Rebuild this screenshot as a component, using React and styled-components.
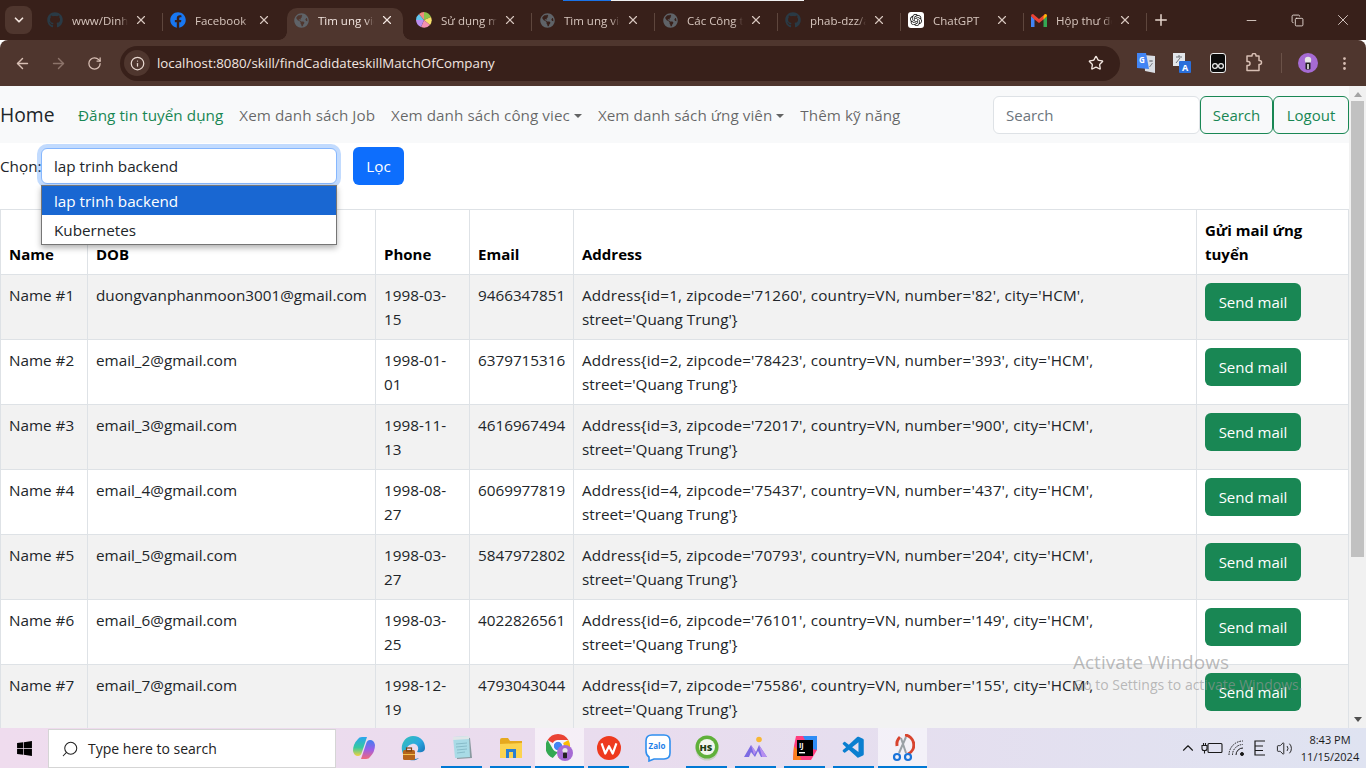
import React from 'react'
import styled, { createGlobalStyle } from 'styled-components'
import {
  ArrowLeft, ArrowRight, RotateCw, Info, Star, EllipsisVertical, Plus, X, Minus, Copy,
  ChevronDown, ChevronUp, Volume2, Search as SearchIcon,
} from 'lucide-react'
import { FaGithub, FaFacebook, FaGlobeAmericas, FaWindows } from 'react-icons/fa'
import { SiOpenai } from 'react-icons/si'
import { VscVscode } from 'react-icons/vsc'

const GlobalStyle = createGlobalStyle`
  html, body {
    margin: 0;
    padding: 0;
    overflow: hidden;
  }
  body {
    font-family: 'Open Sans', 'Liberation Sans', sans-serif;
    font-size: 15.25px;
    color: #212529;
  }
  * { box-sizing: border-box; }
`

const Screen = styled.div`
  position: relative;
  width: 1366px;
  height: 768px;
  display: flex;
  flex-direction: column;
  overflow: hidden;
`

const LoadStrip = styled.div`
  position: absolute;
  top: 0;
  left: 563px;
  width: 241px;
  height: 1px;
  background: linear-gradient(90deg, #1a73e8 0 48px, #f1f1f1 48px);
`

const TabStrip = styled.div`
  height: 40px;
  background: #38201a;
  display: flex;
  align-items: flex-end;
  padding-left: 5px;
  flex-shrink: 0;
`

const TabSearch = styled.div`
  width: 27px;
  height: 28px;
  margin: 0 8px 6px 0;
  border-radius: 8px;
  background: #4f362e;
  color: #f2e4dd;
  display: flex;
  align-items: center;
  justify-content: center;
`

const Tab = styled.div`
  position: relative;
  z-index: 0;
  width: 123px;
  height: 32px;
  display: flex;
  align-items: center;
  padding: 0 15px 8px 7px;
  color: ${(p) => (p.$active ? '#f3e6e0' : '#d7c6be')};
  font-size: 11.5px;
  &::after {
    content: ${(p) => (p.$divider ? "''" : 'none')};
    position: absolute;
    right: 0;
    top: 5px;
    width: 1px;
    height: 18px;
    background: #5e463d;
  }
`

const ActiveBack = styled.div`
  position: absolute;
  z-index: -1;
  top: 0;
  bottom: 0;
  left: 1px;
  right: 6px;
  border-radius: 10px 10px 0 0;
  background: #4f362e;
`

const TabFlare = styled.div`
  position: absolute;
  bottom: 0;
  width: 8px;
  height: 8px;
  ${(p) => (p.$right ? 'right: -8px;' : 'left: -8px;')}
  background: radial-gradient(
    circle at ${(p) => (p.$right ? '100% 0' : '0 0')},
    transparent 7.5px,
    #4f362e 8px
  );
`

const TabIcon = styled.div`
  width: 16px;
  height: 16px;
  flex-shrink: 0;
  display: flex;
  align-items: center;
  justify-content: center;
  color: ${(p) => p.$color || '#5f6368'};
`

const TabTitle = styled.div`
  flex: 1;
  margin: 0 6px 0 9px;
  white-space: nowrap;
  overflow: hidden;
  -webkit-mask-image: linear-gradient(90deg, #000 84%, transparent 100%);
  mask-image: linear-gradient(90deg, #000 84%, transparent 100%);
`

const NewTab = styled.div`
  width: 20px;
  margin: 0 0 10px 4px;
  height: 20px;
  color: #e6d6ce;
  display: flex;
  align-items: center;
  justify-content: center;
`

const WindowButtons = styled.div`
  margin-left: auto;
  display: flex;
  align-self: flex-start;
  height: 40px;
  color: #efe3dd;
`

const WindowButton = styled.div`
  width: 46px;
  display: flex;
  align-items: center;
  justify-content: center;
`

const Toolbar = styled.div`
  height: 46px;
  flex-shrink: 0;
  background: #4f362e;
  border-radius: 8px 8px 0 0;
  display: flex;
  align-items: center;
  padding: 0 9px 0 4px;
  color: #d8bfb4;
`

const NavIcon = styled.div`
  width: 36px;
  display: flex;
  justify-content: center;
  opacity: ${(p) => (p.$off ? 0.45 : 1)};
`

const Omnibox = styled.div`
  width: 1000px;
  height: 35px;
  margin-left: 8px;
  border-radius: 18px;
  background: #38201a;
  display: flex;
  align-items: center;
  padding: 0 16px 0 4px;
  color: #f2e6e0;
  font-size: 13.3px;
`

const SiteInfo = styled.div`
  width: 26px;
  height: 26px;
  border-radius: 50%;
  background: #4f362e;
  display: flex;
  align-items: center;
  justify-content: center;
  margin-right: 7px;
  color: #e8d8d0;
`

const Url = styled.div`
  flex: 1;
`

const Extensions = styled.div`
  flex: 1;
  display: flex;
  align-items: center;
  padding-left: 16px;
  gap: 16px;
`

const ExtSlot = styled.div`
  width: 20px;
  height: 20px;
  display: flex;
  align-items: center;
  justify-content: center;
`

const ToolDivider = styled.div`
  width: 1px;
  height: 20px;
  background: #6b5248;
  margin-left: 1px;
`

const Main = styled.div`
  flex: 1;
  display: flex;
  min-height: 0;
`

const Viewport = styled.div`
  position: relative;
  flex: 1;
  overflow: hidden;
  background: #fff;
`

const Scrollbar = styled.div`
  width: 17px;
  background: #f1f1f1;
  display: flex;
  flex-direction: column;
  align-items: center;
  justify-content: space-between;
  padding: 6px 0 6px;
`

const ScrollArrow = styled.div`
  width: 0;
  height: 0;
  border-left: 4px solid transparent;
  border-right: 4px solid transparent;
  border-top: ${(p) => (p.$down ? '5px solid #505050' : '0')};
  border-bottom: ${(p) => (p.$down ? '0' : '5px solid #a3a3a3')};
`

const ScrollThumb = styled.div`
  width: 13px;
  height: 456px;
  margin: 4px 0 auto;
  background: #c1c1c1;
`

const Navbar = styled.nav`
  height: 57px;
  background: #f8f9fa;
  display: flex;
  align-items: flex-start;
  padding-top: 10px;
`

const Brand = styled.div`
  font-size: 19.3px;
  line-height: 38px;
  color: #212529;
  margin-right: 16px;
  width: 54px;
  white-space: nowrap;
`

const NavLink = styled.div`
  padding: 0 8px;
  line-height: 38px;
  white-space: nowrap;
  letter-spacing: 0.05px;
  color: ${(p) => (p.$primary ? '#198754' : 'rgba(0, 0, 0, 0.6)')};
  &::after {
    content: ${(p) => (p.$caret ? "''" : 'none')};
    display: inline-block;
    margin-left: 4px;
    vertical-align: 3px;
    border-top: 4.5px solid;
    border-left: 4.5px solid transparent;
    border-right: 4.5px solid transparent;
  }
`

const NavForm = styled.div`
  margin-left: auto;
  display: flex;
  font-size: 15px;
`

const SearchField = styled.div`
  width: 207px;
  height: 38px;
  background: #fff;
  border: 1px solid #dee2e6;
  border-radius: 6px;
  padding: 0 12px;
  line-height: 36px;
  color: #6c757d;
`

const OutlineButton = styled.div`
  height: 38px;
  width: ${(p) => p.$w}px;
  border: 1px solid #198754;
  border-radius: 6px;
  color: #198754;
  line-height: 36px;
  text-align: center;
`

const FilterRow = styled.div`
  position: relative;
  display: flex;
  align-items: center;
  padding-top: 4px;
  margin-bottom: 24px;
`

const FilterLabel = styled.div`
  width: 41px;
  white-space: nowrap;
`

const SelectBox = styled.div`
  width: 296px;
  height: 36px;
  border: 1px solid #86b7fe;
  border-radius: 6px;
  box-shadow: 0 0 0 4px rgba(13, 110, 253, 0.25);
  padding: 0 12px;
  line-height: 34px;
  background: #fff;
`

const FilterButton = styled.div`
  margin-left: 16px;
  width: 51px;
  height: 38px;
  background: #0d6efd;
  color: #fff;
  border-radius: 6px;
  text-align: center;
  line-height: 38px;
`

const Dropdown = styled.div`
  position: absolute;
  top: 42px;
  left: 41px;
  width: 296px;
  height: 60px;
  background: #fff;
  border: 1px solid #767676;
  box-shadow: 0 3px 6px rgba(0, 0, 0, 0.3);
  z-index: 2;
`

const Option = styled.div`
  height: 29px;
  line-height: 31px;
  padding-left: 12px;
  background: ${(p) => (p.$selected ? '#1967d2' : '#fff')};
  color: ${(p) => (p.$selected ? '#fff' : '#212529')};
`

const Table = styled.table`
  width: 1348px;
  border-collapse: collapse;
  table-layout: fixed;
`

const HeadCell = styled.th`
  width: ${(p) => p.$w}px;
  border: 1px solid #dee2e6;
  padding: 8px;
  text-align: left;
  vertical-align: bottom;
  line-height: 24px;
  font-size: 15px;
  color: #000;
  font-weight: 700;
`

const Row = styled.tr`
  background: ${(p) => (p.$odd ? '#f2f2f2' : '#fff')};
`

const Cell = styled.td`
  border: 1px solid #dee2e6;
  padding: 8px;
  line-height: 24px;
  vertical-align: top;
  color: #212529;
`

const AddressLine = styled.span`
  letter-spacing: 0.17px;
`

const SendButton = styled.div`
  width: 96px;
  height: 38px;
  background: #198754;
  color: #fff;
  border-radius: 6px;
  text-align: center;
  line-height: 38px;
  font-size: 15px;
`

const Watermark = styled.div`
  position: absolute;
  left: 1073px;
  top: 564px;
  color: rgba(150, 150, 150, 0.65);
  font-size: 14px;
  line-height: 22px;
  white-space: nowrap;
  pointer-events: none;
`

const WatermarkTitle = styled.div`
  font-size: 19px;
  line-height: 24px;
`

const Taskbar = styled.div`
  height: 40px;
  flex-shrink: 0;
  background: linear-gradient(90deg, #efdcee 0%, #e9dcee 45%, #dfe3f1 100%);
  display: flex;
  align-items: stretch;
`

const StartButton = styled.div`
  width: 48px;
  display: flex;
  align-items: center;
  justify-content: center;
  color: #000;
`

const TaskSearch = styled.div`
  width: 288px;
  margin-top: 1px;
  background: #fff;
  border: 1px solid #d5d5d5;
  display: flex;
  align-items: center;
  padding-left: 12px;
  font-size: 14px;
  color: #222;
  gap: 9px;
`

const FlippedIcon = styled.div`
  display: flex;
  transform: scaleX(-1);
`

const TaskApps = styled.div`
  display: flex;
  margin-left: 3px;
`

const TaskApp = styled.div`
  position: relative;
  width: 49px;
  display: flex;
  align-items: center;
  justify-content: center;
  background: ${(p) => (p.$active ? 'rgba(255, 255, 255, 0.55)' : 'transparent')};
  &::after {
    content: ${(p) => (p.$running ? "''" : 'none')};
    position: absolute;
    left: ${(p) => (p.$active ? 0 : 4)}px;
    right: ${(p) => (p.$active ? 0 : 4)}px;
    bottom: 0;
    height: 2px;
    background: #0078d4;
  }
`

const Tray = styled.div`
  margin-left: auto;
  display: flex;
  align-items: center;
  color: #1a1a1a;
`

const TraySlot = styled.div`
  width: 24px;
  display: flex;
  justify-content: center;
`

const Clock = styled.div`
  width: 67px;
  padding-right: 5px;
  margin-left: 3px;
  text-align: center;
  font-size: 11px;
  line-height: 17px;
  white-space: nowrap;
`

const columns = [
  { label: 'Name', w: 87 },
  { label: 'DOB', w: 288 },
  { label: 'Phone', w: 94 },
  { label: 'Email', w: 104 },
  { label: 'Address', w: 623 },
  { label: 'Gửi mail ứng tuyển', w: 152 },
]

const people = [
  ['duongvanphanmoon3001@gmail.com', '1998-03-15', '9466347851', 1, '71260', '82'],
  ['email_2@gmail.com', '1998-01-01', '6379715316', 2, '78423', '393'],
  ['email_3@gmail.com', '1998-11-13', '4616967494', 3, '72017', '900'],
  ['email_4@gmail.com', '1998-08-27', '6069977819', 4, '75437', '437'],
  ['email_5@gmail.com', '1998-03-27', '5847972802', 5, '70793', '204'],
  ['email_6@gmail.com', '1998-03-25', '4022826561', 6, '76101', '149'],
  ['email_7@gmail.com', '1998-12-19', '4793043044', 7, '75586', '155'],
]

const Pinwheel = () => (
  <svg width="16" height="16" viewBox="0 0 16 16">
    <path d="M8 8 L8 0 A8 8 0 0 1 15 5Z" fill="#8bc34a" />
    <path d="M8 8 L15 5 A8 8 0 0 1 14 13Z" fill="#f6df6b" />
    <path d="M8 8 L14 13 A8 8 0 0 1 5 15Z" fill="#f48fb1" />
    <path d="M8 8 L5 15 A8 8 0 0 1 0 8Z" fill="#ba8ef0" />
    <path d="M8 8 L0 8 A8 8 0 0 1 3 2Z" fill="#62c6ef" />
    <path d="M8 8 L3 2 A8 8 0 0 1 8 0Z" fill="#f28b82" />
  </svg>
)

const GmailIcon = () => (
  <svg width="16" height="13" viewBox="0 0 16 13">
    <path d="M0 2 L0 13 L3.5 13 L3.5 5Z" fill="#4285f4" />
    <path d="M16 2 L16 13 L12.5 13 L12.5 5Z" fill="#34a853" />
    <path d="M0 2 Q0 0 2 0 L8 5 L14 0 Q16 0 16 2 L12.5 5.5 L8 9 L3.5 5.5Z" fill="#ea4335" />
    <path d="M12.5 2.5 L14 0 Q16 0 16 2 L12.5 5.5Z" fill="#fbbc04" />
  </svg>
)

const ChatGptIcon = () => (
  <svg width="16" height="16" viewBox="0 0 16 16">
    <rect width="16" height="16" rx="3" fill="#fff" />
    <foreignObject x="2" y="2" width="12" height="12">
      <SiOpenai size={12} color="#111" />
    </foreignObject>
  </svg>
)

const TranslateIcon = () => (
  <svg width="18" height="20" viewBox="0 0 18 20">
    <path d="M7 2 L18 3 L18 20 L8 18Z" fill="#d9dde3" />
    <path d="M12 8 h4 M14 7 v2 M12.5 14 l3-4" stroke="#7a7f85" strokeWidth="1" />
    <path d="M0 0 L9 0 L12 16 L0 15Z" fill="#4285f4" />
    <text x="2" y="10" fontSize="8" fontWeight="700" fill="#fff" fontFamily="Open Sans, sans-serif">G</text>
  </svg>
)

const TranslateAltIcon = () => (
  <svg width="18" height="20" viewBox="0 0 18 20">
    <rect x="0" y="0" width="12" height="13" fill="#e3e6ea" />
    <path d="M3 4 h6 M6 2 v2 M3 10 l4-5" stroke="#6d7278" strokeWidth="1" />
    <rect x="6" y="8" width="12" height="12" rx="1" fill="#2a6fdb" />
    <text x="9" y="18" fontSize="9" fontWeight="700" fill="#fff" fontFamily="Open Sans, sans-serif">A</text>
  </svg>
)

const GlassesIcon = () => (
  <svg width="16" height="20" viewBox="0 0 16 20">
    <rect x="0.5" y="0.5" width="15" height="19" rx="2.5" fill="#0b0b0b" stroke="#eee" />
    <circle cx="5" cy="13" r="2.4" fill="none" stroke="#eee" strokeWidth="1.2" />
    <circle cx="11" cy="13" r="2.4" fill="none" stroke="#eee" strokeWidth="1.2" />
  </svg>
)

const PuzzleIcon = () => (
  <svg width="18" height="20" viewBox="0 0 18 20" fill="none" stroke="#d8bfb4" strokeWidth="1.5" strokeLinejoin="round">
    <path d="M2 3 H7 V2.5 A2 2 0 0 1 11 2.5 V3 H14 V7.5 H14.5 A2 2 0 0 1 14.5 11.5 H14 V17.5 H2 V12.5 H3 A2 2 0 0 0 3 8.5 H2Z" />
  </svg>
)

const Avatar = ({ size = 20 }) => (
  <svg width={size} height={size} viewBox="0 0 20 20">
    <circle cx="10" cy="10" r="10" fill="#a66bd4" />
    <circle cx="10" cy="7" r="3.2" fill="#e6e6e6" />
    <rect x="7.5" y="9.5" width="5" height="7" rx="1" fill="#222" />
    <rect x="9.2" y="11" width="1.6" height="5" fill="#eee" />
  </svg>
)

const CopilotIcon = () => (
  <svg width="24" height="24" viewBox="0 0 24 24">
    <defs>
      <linearGradient id="cpa" x1="0" y1="0" x2="0" y2="1">
        <stop offset="0" stopColor="#2aa5ef" />
        <stop offset="0.55" stopColor="#35c9a0" />
        <stop offset="1" stopColor="#f2d13e" />
      </linearGradient>
      <linearGradient id="cpb" x1="0" y1="0" x2="0" y2="1">
        <stop offset="0" stopColor="#3f7ff0" />
        <stop offset="0.5" stopColor="#9a5fe8" />
        <stop offset="1" stopColor="#f2697a" />
      </linearGradient>
    </defs>
    <path d="M6 3 Q7 1 10 1 L15 1 L10 16 Q9 20 6 20 Q2 20 1 15 Q1 8 6 3Z" fill="url(#cpa)" />
    <path d="M18 21 Q17 23 14 23 L9 23 L14 8 Q15 4 18 4 Q22 4 23 9 Q23 16 18 21Z" fill="url(#cpb)" />
  </svg>
)

const EdgeIcon = () => (
  <svg width="26" height="26" viewBox="0 0 26 26">
    <defs>
      <linearGradient id="edg" x1="0" y1="0" x2="1" y2="1">
        <stop offset="0" stopColor="#35c1b6" />
        <stop offset="0.5" stopColor="#2ba8e0" />
        <stop offset="1" stopColor="#0c59a4" />
      </linearGradient>
    </defs>
    <path d="M13 1 C21 1 25 7 25 13 C25 17 21 18 17 17 C20 13 17 8 12 9 C7 10 5 15 7 20 C9 24 14 25 19 23 C15 27 6 26 3 19 C-1 10 5 1 13 1Z" fill="url(#edg)" />
    <rect x="3" y="15" width="12" height="10" rx="1.5" fill="#b6651c" />
    <rect x="6.5" y="13" width="5" height="3" fill="none" stroke="#7a4312" strokeWidth="1.2" />
    <rect x="3" y="19" width="12" height="1" fill="#f2c14e" />
  </svg>
)

const NotepadIcon = () => (
  <svg width="24" height="26" viewBox="0 0 24 26">
    <path d="M5 2 L20 3 L22 23 L7 24Z" fill="#8a9aa0" />
    <path d="M3 2 L19 1 L20 22 L5 23Z" fill="#a9dbe6" />
    <path d="M3 2 L19 1 L19 4 L3 5Z" fill="#e0e6e8" />
    <path d="M6 9 L17 8 M6 12 L17 11 M7 15 L17 14 M7 18 L15 17" stroke="#7fb4c2" strokeWidth="0.8" />
  </svg>
)

const FolderIcon = () => (
  <svg width="22" height="22" viewBox="0 0 22 22">
    <path d="M0 3 Q0 1 2 1 L8 1 L10 4 L22 4 L22 20 L0 20Z" fill="#e6a91f" />
    <path d="M0 7 L22 6 L22 21 L0 21Z" fill="#fcd34f" />
    <path d="M6 12 L16 12 L16 21 L13 21 L13 15 L9 15 L9 21 L6 21Z" fill="#2b7fd1" />
  </svg>
)

const ChromeIcon = () => (
  <svg width="28" height="28" viewBox="0 0 28 28">
    <path d="M12 0 A12 12 0 0 1 22.4 6 L12 6 A6 6 0 0 0 6.8 9 L1.6 6 A12 12 0 0 1 12 0Z" fill="#ea4335" />
    <path d="M1.6 6 L6.8 15 A6 6 0 0 0 12 18 L6.8 24 A12 12 0 0 1 1.6 6Z" fill="#34a853" />
    <path d="M22.4 6 A12 12 0 0 1 12 24 L17.2 15 A6 6 0 0 0 17.2 9Z" fill="#fbbc04" />
    <circle cx="12" cy="12" r="4.8" fill="#4285f4" stroke="#fff" strokeWidth="1.2" />
    <g transform="translate(11 11) scale(0.8)">
      <circle cx="10" cy="10" r="10" fill="#a66bd4" />
      <circle cx="10" cy="7" r="3.2" fill="#e6e6e6" />
      <rect x="7.5" y="9.5" width="5" height="7" rx="1" fill="#222" />
    </g>
  </svg>
)

const WpsIcon = () => (
  <svg width="24" height="24" viewBox="0 0 26 26">
    <circle cx="13" cy="13" r="13" fill="#ee3a1e" />
    <path d="M5 8 L9 19 L13 11 L17 19 L21 8" fill="none" stroke="#fff" strokeWidth="2.4" strokeLinejoin="round" />
  </svg>
)

const ZaloIcon = () => (
  <svg width="26" height="28" viewBox="0 0 26 28">
    <path d="M7 1 L19 1 Q25 1 25 7 L25 19 Q25 25 19 25 L9 25 L4 27 L4 23 Q1 21 1 17 L1 7 Q1 1 7 1Z" fill="#fff" stroke="#2f8fef" strokeWidth="1.6" />
    <text x="3.5" y="15" fontSize="8" fontWeight="700" fill="#1f7fe8" fontFamily="Open Sans, sans-serif">Zalo</text>
  </svg>
)

const HsIcon = () => (
  <svg width="24" height="26" viewBox="0 0 24 26">
    <circle cx="12" cy="14" r="11.5" fill="#c7cfc4" />
    <circle cx="12" cy="12" r="11.5" fill="#5fb03a" />
    <circle cx="12" cy="12" r="8" fill="#f2f6ee" />
    <text x="4.6" y="15.5" fontSize="9.5" fontWeight="800" fill="#1c3d12" fontFamily="Open Sans, sans-serif">HS</text>
  </svg>
)

const MountainIcon = () => (
  <svg width="24" height="24" viewBox="0 0 24 24">
    <circle cx="15" cy="3.5" r="2.8" fill="#f7b733" />
    <path d="M0 21 L7 9 L12 16 L15 9 L23 21 L17 21 L14 15 L11 21 L7 16 L5 21Z" fill="#7c6be3" />
    <path d="M7 9 L12 16 L10 19Z M15 9 L23 21 L18 21Z" fill="#b68ff0" />
  </svg>
)

const IdeaIcon = () => (
  <svg width="24" height="24" viewBox="0 0 24 24">
    <path d="M3 0 L24 0 L24 14 L18 24 L0 24 L1 10Z" fill="#ff3d7f" />
    <path d="M10 0 L24 0 L24 14 L16 12Z" fill="#2f8cf5" />
    <path d="M0 24 L1 10 L6 16 L8 24Z" fill="#fc801d" />
    <rect x="4" y="4" width="16" height="16" fill="#000" />
    <text x="6" y="12" fontSize="7" fontWeight="700" fill="#fff" fontFamily="Open Sans, sans-serif">IJ</text>
    <rect x="6" y="16" width="6" height="1.4" fill="#fff" />
  </svg>
)

const SnipIcon = () => (
  <svg width="24" height="28" viewBox="0 0 24 28">
    <path d="M14 1 A10 10 0 0 1 17 20" fill="none" stroke="#d8432e" strokeWidth="3" />
    <path d="M9 3 A10 10 0 0 0 6 12" fill="none" stroke="#d8432e" strokeWidth="3" />
    <path d="M8 19 L15 3 M15 19 L10 4" stroke="#9aa0a6" strokeWidth="2" />
    <circle cx="6" cy="23" r="3" fill="none" stroke="#1a73d9" strokeWidth="2.2" />
    <circle cx="17" cy="23" r="3" fill="none" stroke="#1a73d9" strokeWidth="2.2" />
  </svg>
)

const BatteryIcon = () => (
  <svg width="22" height="16" viewBox="0 0 22 16" fill="none" stroke="#1a1a1a" strokeWidth="1.1">
    <rect x="7" y="3.5" width="14" height="9" rx="1" />
    <path d="M1 5.5 h5 v3 a2 2 0 0 1-2 2 h-1 a2 2 0 0 1-2-2Z M2.5 3 v2.5 M4.5 3 v2.5 M3.5 10.5 v3" />
  </svg>
)

const WifiIcon = () => (
  <svg width="16" height="16" viewBox="0 0 16 16" fill="none" stroke="#1a1a1a" strokeWidth="1">
    <path d="M1 15 A14 14 0 0 1 15 1" strokeDasharray="1.6 1" />
    <path d="M4.5 15 A10.5 10.5 0 0 1 15 4.5" strokeDasharray="1.6 1" />
    <path d="M8 15 A7 7 0 0 1 15 8" />
    <circle cx="14" cy="14" r="1.5" fill="#1a1a1a" />
  </svg>
)

const InputIcon = () => (
  <svg width="12" height="16" viewBox="0 0 12 16" fill="none" stroke="#1a1a1a" strokeWidth="1.2">
    <path d="M11 1 H1 V15 H11 M1 6 H9 M1 10.5 H9" />
  </svg>
)

const tabs = [
  { title: 'www/Dinh', icon: <FaGithub size={16} />, color: '#2a3a45', divider: true },
  { title: 'Facebook', icon: <FaFacebook size={16} />, color: '#1877f2' },
  { title: 'Tìm ung viên', icon: <FaGlobeAmericas size={15} />, active: true },
  { title: 'Sử dụng mã', icon: <Pinwheel />, divider: true },
  { title: 'Tìm ung viên', icon: <FaGlobeAmericas size={15} />, divider: true },
  { title: 'Các Công ty', icon: <FaGlobeAmericas size={15} />, divider: true },
  { title: 'phab-dzz/a', icon: <FaGithub size={16} />, color: '#2a3a45', divider: true },
  { title: 'ChatGPT', icon: <ChatGptIcon />, divider: true },
  { title: 'Hộp thư đến', icon: <GmailIcon />, divider: true },
]

const taskApps = [
  { icon: <CopilotIcon /> },
  { icon: <EdgeIcon /> },
  { icon: <NotepadIcon />, running: true },
  { icon: <FolderIcon />, running: true },
  { icon: <ChromeIcon />, running: true, active: true },
  { icon: <WpsIcon />, running: true },
  { icon: <ZaloIcon /> },
  { icon: <HsIcon />, running: true },
  { icon: <MountainIcon />, running: true },
  { icon: <IdeaIcon />, running: true },
  { icon: <VscVscode size={26} color="#0a7fd0" />, running: true },
  { icon: <SnipIcon />, running: true, active: true },
]

const App = () => (
  <Screen>
    <GlobalStyle />
    <LoadStrip />
    <TabStrip>
      <TabSearch><ChevronDown size={14} strokeWidth={3} /></TabSearch>
      {tabs.map((t, i) => (
        <Tab key={i} $active={t.active} $divider={t.divider}>
          {t.active && (
            <ActiveBack>
              <TabFlare />
              <TabFlare $right />
            </ActiveBack>
          )}
          <TabIcon $color={t.color}>{t.icon}</TabIcon>
          <TabTitle>{t.title}</TabTitle>
          <X size={14} strokeWidth={2} />
        </Tab>
      ))}
      <NewTab><Plus size={18} strokeWidth={2} /></NewTab>
      <WindowButtons>
        <WindowButton><Minus size={15} strokeWidth={1.3} /></WindowButton>
        <WindowButton><Copy size={13} strokeWidth={1.6} /></WindowButton>
        <WindowButton><X size={18} strokeWidth={1.1} /></WindowButton>
      </WindowButtons>
    </TabStrip>
    <Toolbar>
      <NavIcon><ArrowLeft size={17} /></NavIcon>
      <NavIcon $off><ArrowRight size={17} /></NavIcon>
      <NavIcon><RotateCw size={15} /></NavIcon>
      <Omnibox>
        <SiteInfo><Info size={15} /></SiteInfo>
        <Url>localhost:8080/skill/findCadidateskillMatchOfCompany</Url>
        <Star size={16} />
      </Omnibox>
      <Extensions>
        <ExtSlot><TranslateIcon /></ExtSlot>
        <ExtSlot><TranslateAltIcon /></ExtSlot>
        <ExtSlot><GlassesIcon /></ExtSlot>
        <ExtSlot><PuzzleIcon /></ExtSlot>
        <ToolDivider />
        <ExtSlot><Avatar /></ExtSlot>
        <ExtSlot><EllipsisVertical size={17} /></ExtSlot>
      </Extensions>
    </Toolbar>
    <Main>
      <Viewport>
        <Navbar>
          <Brand>Home</Brand>
          <NavLink $primary>Đăng tin tuyển dụng</NavLink>
          <NavLink>Xem danh sách Job</NavLink>
          <NavLink $caret>Xem danh sách công viec</NavLink>
          <NavLink $caret>Xem danh sách ứng viên</NavLink>
          <NavLink>Thêm kỹ năng</NavLink>
          <NavForm>
            <SearchField>Search</SearchField>
            <OutlineButton $w={73}>Search</OutlineButton>
            <OutlineButton $w={76}>Logout</OutlineButton>
          </NavForm>
        </Navbar>
        <FilterRow>
          <FilterLabel>Chọn:</FilterLabel>
          <SelectBox>lap trinh backend</SelectBox>
          <FilterButton>Lọc</FilterButton>
          <Dropdown>
            <Option $selected>lap trinh backend</Option>
            <Option>Kubernetes</Option>
          </Dropdown>
        </FilterRow>
        <Table>
          <thead>
            <tr>
              {columns.map((c) => (
                <HeadCell key={c.label} $w={c.w}>{c.label}</HeadCell>
              ))}
            </tr>
          </thead>
          <tbody>
            {people.map(([email, dob, phone, id, zip, num], i) => (
              <Row key={id} $odd={i % 2 === 0}>
                <Cell>Name #{id}</Cell>
                <Cell>{email}</Cell>
                <Cell>{dob}</Cell>
                <Cell>{phone}</Cell>
                <Cell>
                  <AddressLine>
                    Address{'{'}id={id}, zipcode='{zip}', country=VN, number='{num}', city='HCM',
                  </AddressLine>
                  <br />
                  street='Quang Trung'{'}'}
                </Cell>
                <Cell><SendButton>Send mail</SendButton></Cell>
              </Row>
            ))}
          </tbody>
        </Table>
        <Watermark>
          <WatermarkTitle>Activate Windows</WatermarkTitle>
          Go to Settings to activate Windows.
        </Watermark>
      </Viewport>
      <Scrollbar>
        <ScrollArrow />
        <ScrollThumb />
        <ScrollArrow $down />
      </Scrollbar>
    </Main>
    <Taskbar>
      <StartButton><FaWindows size={17} /></StartButton>
      <TaskSearch>
        <FlippedIcon><SearchIcon size={18} strokeWidth={1.4} /></FlippedIcon>
        Type here to search
      </TaskSearch>
      <TaskApps>
        {taskApps.map((a, i) => (
          <TaskApp key={i} $active={a.active} $running={a.running}>{a.icon}</TaskApp>
        ))}
      </TaskApps>
      <Tray>
        <TraySlot><ChevronUp size={18} strokeWidth={1.5} /></TraySlot>
        <TraySlot><BatteryIcon /></TraySlot>
        <TraySlot><WifiIcon /></TraySlot>
        <TraySlot><InputIcon /></TraySlot>
        <TraySlot><Volume2 size={17} strokeWidth={1.3} /></TraySlot>
        <Clock>8:43 PM<br />11/15/2024</Clock>
      </Tray>
    </Taskbar>
  </Screen>
)

export default App
